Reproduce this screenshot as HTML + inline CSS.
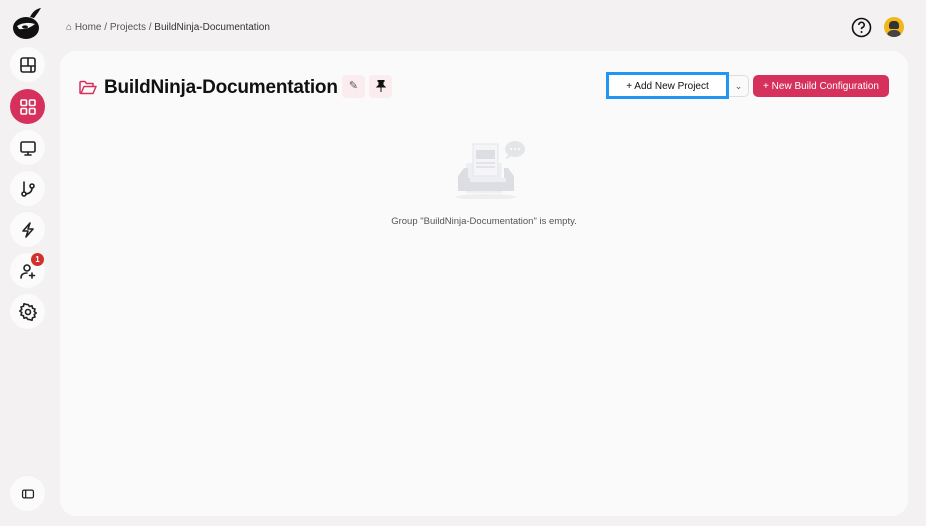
<!DOCTYPE html>
<html><head><meta charset="utf-8"><style>
body{margin:0;width:926px;height:526px;background:#f3f1f2;font-family:"Liberation Sans",sans-serif;position:relative;overflow:hidden}
.c{position:absolute;width:35px;height:35px;border-radius:50%;background:#fbfbfb;left:10px;display:flex;align-items:center;justify-content:center}
.c svg{width:18px;height:18px;fill:none;stroke:#222;stroke-width:1.6;stroke-linecap:round;stroke-linejoin:round}
.card{position:absolute;left:60px;top:51px;width:848px;height:465px;background:#fafafa;border-radius:16px}
.crumb{position:absolute;left:66px;top:22px;font-size:10px;color:#555}
</style></head><body>
<svg style="position:absolute;left:10px;top:5px" width="34" height="36" viewBox="0 0 34 36"><ellipse cx="16" cy="23" rx="13" ry="11" fill="#111"/><path d="M20 12 Q24 4 31 3 Q28 8 24 13Z" fill="#111"/><path d="M7 21 Q15 16 25 19 Q18 25 9 24Z" fill="#f3f1f2"/><ellipse cx="15" cy="22" rx="3" ry="1.6" fill="#111"/></svg>
<div class="c" style="top:47px"><svg viewBox="0 0 18 18"><rect x="2" y="2" width="14" height="14" rx="2"/><path d="M2 10h14M9 2v8M12 10v6"/></svg></div>
<div class="c" style="top:89px;background:#d6305c"><svg viewBox="0 0 18 18" style="stroke:#fff"><rect x="2" y="2" width="5.5" height="5.5" rx="1"/><rect x="10.5" y="2" width="5.5" height="5.5" rx="1"/><rect x="2" y="10.5" width="5.5" height="5.5" rx="1"/><rect x="10.5" y="10.5" width="5.5" height="5.5" rx="1"/></svg></div>
<div class="c" style="top:130px"><svg viewBox="0 0 18 18"><rect x="2" y="3" width="14" height="10" rx="1.5"/><path d="M9 13v3M6 16h6"/></svg></div>
<div class="c" style="top:171px"><svg viewBox="0 0 18 18"><circle cx="5" cy="14" r="2"/><circle cx="13" cy="6" r="2"/><path d="M5 2v10M13 8q0 5-6 6"/></svg></div>
<div class="c" style="top:212px"><svg viewBox="0 0 18 18"><path d="M11 2L4 10h5l-2 6 7-8h-5z"/></svg></div>
<div class="c" style="top:253px"><svg viewBox="0 0 18 18"><circle cx="8" cy="6" r="3"/><path d="M2 16q0-5 6-5M13 11v5M10.5 13.5h5"/></svg></div>
<div style="position:absolute;left:31px;top:253px;width:13px;height:13px;border-radius:50%;background:#d0312d;color:#fff;font-size:8px;font-weight:bold;text-align:center;line-height:13px">1</div>
<div class="c" style="top:294px"><svg viewBox="0 0 18 18"><circle cx="9" cy="9" r="2.5"/><path d="M9 1.5l1.5 2 2.5-.8.5 2.5 2.5.8-.8 2.5 2 1.5-2 1.5.8 2.5-2.5.8-.5 2.5-2.5-.8L9 16.5l-1.5-2-2.5.8-.5-2.5-2.5-.8.8-2.5-2-1.5 2-1.5-.8-2.5 2.5-.8.5-2.5 2.5.8z"/></svg></div>
<div class="c" style="top:476px"><svg viewBox="0 0 18 18" style="width:14px"><rect x="2" y="4" width="14" height="10" rx="2"/><path d="M6 4v10"/></svg></div>
<div class="crumb">⌂ Home / Projects / <span style="color:#333">BuildNinja-Documentation</span></div>
<svg style="position:absolute;left:851px;top:17px" width="21" height="21" viewBox="0 0 21 21"><circle cx="10.5" cy="10.5" r="9" fill="none" stroke="#111" stroke-width="1.6"/><path d="M7.8 8a2.7 2.7 0 1 1 3.6 2.5c-.7.3-.9.8-.9 1.6" fill="none" stroke="#111" stroke-width="1.6"/><circle cx="10.5" cy="15" r="1" fill="#111"/></svg>
<div style="position:absolute;left:884px;top:17px;width:20px;height:20px;border-radius:50%;background:#f2b619;overflow:hidden"><div style="position:absolute;left:5px;top:4px;width:10px;height:8px;background:#333;border-radius:4px 4px 2px 2px"></div><div style="position:absolute;left:3px;top:13px;width:14px;height:8px;background:#444;border-radius:6px 6px 0 0"></div></div>
<div class="card">
<svg style="position:absolute;left:19px;top:29px" width="18" height="15" viewBox="0 0 18 15"><path d="M1 2.5v10a1 1 0 0 0 1 1h12l3-7H5l-3 7M1 2.5a1 1 0 0 1 1-1h4l1.5 2H14v3" fill="none" stroke="#d6305c" stroke-width="1.5" stroke-linejoin="round"/></svg>
<div style="position:absolute;left:44px;top:26px;font-size:19px;font-weight:bold;color:#111;letter-spacing:-0.2px;white-space:nowrap">BuildNinja-Documentation</div>
<div style="position:absolute;left:282px;top:24px;width:23px;height:23px;border-radius:4px;background:#fbecef;font-size:11px;text-align:center;line-height:23px;color:#555">✎</div>
<div style="position:absolute;left:309px;top:24px;width:23px;height:23px;border-radius:4px;background:#fbecef;text-align:center"><svg width="10" height="12" viewBox="0 0 10 12" style="margin-top:5px"><path d="M2 0h6v1.5L7 2v3l2 2H1l2-2V2L2 1.5zM5 7v5" fill="#111" stroke="#111" stroke-width="1"/></svg></div>
<div style="position:absolute;left:546px;top:21px;width:123px;height:27px;border:3px solid #2196f3;box-sizing:border-box;background:#fff;font-size:10px;text-align:center;line-height:24px;color:#111">+ Add New Project</div>
<div style="position:absolute;left:669px;top:24px;width:20px;height:22px;border:1px solid #ddd;border-left:none;border-radius:0 5px 5px 0;box-sizing:border-box;font-size:9px;text-align:center;line-height:20px;color:#555">⌄</div>
<div style="position:absolute;left:693px;top:24px;width:136px;height:22px;border-radius:5px;background:#d6305c;color:#fff;font-size:10px;text-align:center;line-height:23px">+ New Build Configuration</div>
<svg style="position:absolute;left:390px;top:88px" width="80" height="60" viewBox="0 0 80 60"><ellipse cx="36" cy="58" rx="30" ry="3" fill="#eee"/><rect x="16" y="24" width="36" height="30" fill="#eeeff2"/><rect x="23" y="5" width="25" height="32" fill="#f5f5f7" stroke="#e4e5ea"/><rect x="26" y="11" width="19" height="9" fill="#dcdee3"/><path d="M26 24h19M26 28h19" stroke="#dcdee3" stroke-width="1.5"/><path d="M8 37l6-8h4v10h36v-10h4l6 8v15H8z" fill="#dcdee3"/><path d="M20 39h36v4H20z" fill="#eceef1"/><ellipse cx="65" cy="10" rx="10" ry="8" fill="#e4e5e9"/><path d="M58 16l-3 4 6-2z" fill="#e4e5e9"/><circle cx="61" cy="10" r="1" fill="#fff"/><circle cx="65" cy="10" r="1" fill="#fff"/><circle cx="69" cy="10" r="1" fill="#fff"/></svg>
<div style="position:absolute;left:0;width:848px;top:165px;text-align:center;font-size:9.5px;color:#555">Group "BuildNinja-Documentation" is empty.</div>
</div>
</body></html>
